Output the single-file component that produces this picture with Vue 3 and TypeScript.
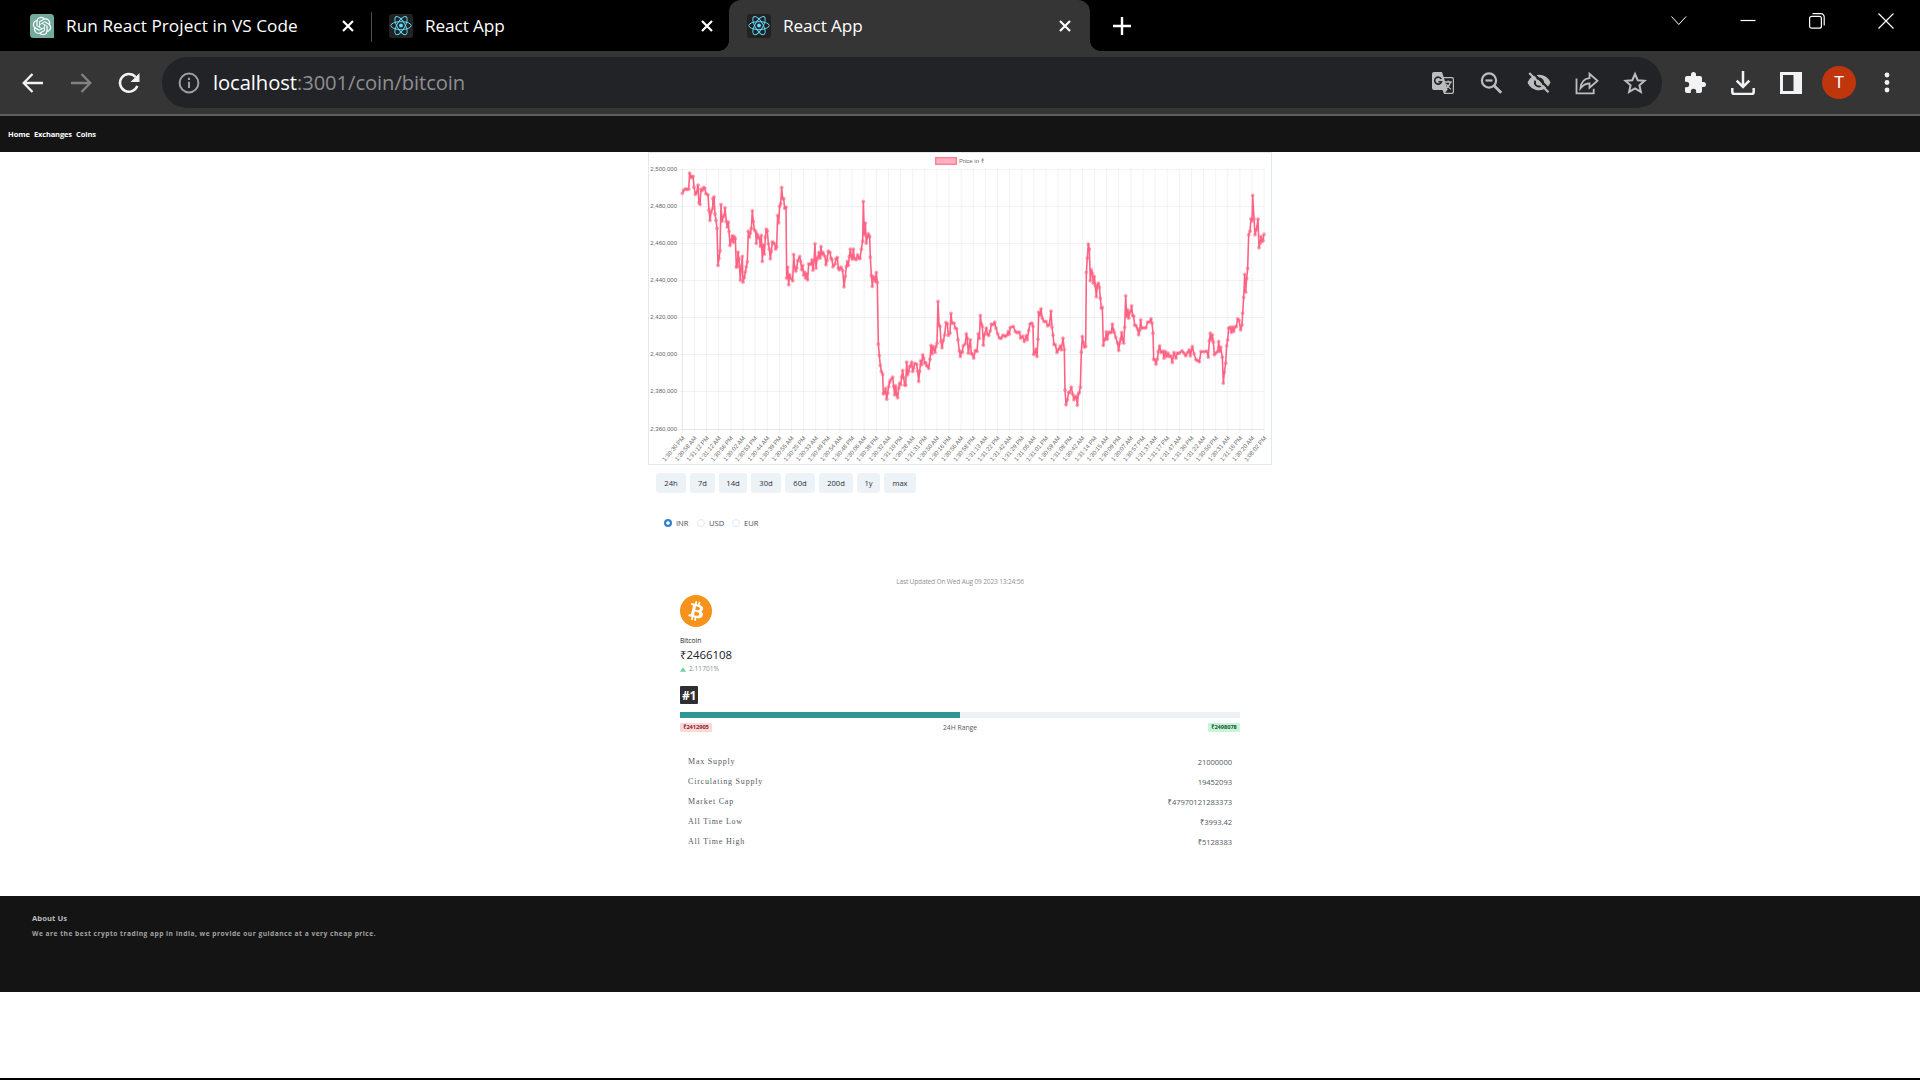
<script setup lang="ts">
interface Row { label: string; value: string }

const ranges: string[] = ['24h', '7d', '14d', '30d', '60d', '200d', '1y', 'max']
const rangeWidths: number[] = [30, 25, 28, 30, 30, 34, 23, 32]
const rows: Row[] = [
  { label: 'Max Supply', value: '21000000' },
  { label: 'Circulating Supply', value: '19452093' },
  { label: 'Market Cap', value: '₹47970121283373' },
  { label: 'All Time Low', value: '₹3993.42' },
  { label: 'All Time High', value: '₹5128383' },
]

const times: string[] = ('30:30 30:58 31:12 31:12 30:56 30:02 30:53 30:44 30:39 30:55 30:25 30:33 30:49 30:54 30:48 30:06 ' +
  '30:38 30:32 31:10 30:28 31:31 30:50 30:16 30:56 30:58 31:13 31:22 31:42 31:29 31:05 31:01 30:59 31:08 30:42 31:14 ' +
  '30:15 30:09 30:07 30:57 31:37 31:17 31:47 31:30 31:22 30:50 30:31 31:16 30:20 08:02')
  .split(' ').map((t, i) => `1:${t} ${i % 2 ? 'AM' : 'PM'}`)
const xAt = (i: number): number => 34.4 + i * 12.12
const yTicks = [2500, 2480, 2460, 2440, 2420, 2400, 2380, 2360].map((v, i) => ({
  label: `2,${String(v).slice(1)},000`, y: 17.5 + i * 37 + (i === 7 ? 1 : 0),
}))

const sections: [number, string][] = [
  [0, '127,131 131,121 137,117 141,119 146,118 149,70 153,84 156,80 159,80 162,112 166,134 170,128 174,106 177,158 180,164 183,118 187,122 191,113 194,115 198,132 204,135 207,181 210,212 213,188 218,176 219,147 222,141 225,193 228,212 231,236 234,347 237,326 240,303 243,164 246,214 249,202 253,196 255,174 259,215 262,232 265,217 267,245 270,287 274,270 277,258 280,278 282,260 286,266 289,352 292,350 294,307 297,328 301,391 304,350 307,320 309,397 313,383 316,366 319,351 322,336 325,244 328,262 331,250 334,236 337,183 340,215 343,240 347,245 349,281 352,253 355,262 358,265 361,290 364,257 367,335 370,285 373,313 376,262 379,238 382,243 385,282 388,298 391,327 394,305 397,276 400,280 404,282 407,298 410,291 413,197 416,219 419,169 422,162 425,113 428,146 431,147 434,176 438,172 440,385 443,352 446,405 449,375 452,385 458,393 461,314 464,352 467,364 470,355 473,333 479,320 482,335 485,360 488,347 491,376 494,367 497,385 500,372 503,390 506,342 512,344 516,330 519,361 522,335 525,282 528,355 531,328 534,322 537,308 540,325 543,290 546,315 549,308 555,320 558,345 561,332 565,304 570,308 573,325 576,330 579,351 585,343 588,327 592,323 595,355 598,360 603,352 608,362 612,411 616,380 619,350 622,335 625,347 628,320 631,298 634,320 637,328 640,298 643,325 648,330 653,315 657,326'],
  [630, '30,326 34,298 38,274 40,155 43,255 46,220 49,280 52,262 55,252 59,260 61,322 64,377 67,410 70,380 73,385 76,395 79,368 82,398 85,583 88,617 91,647 94,665 98,673 100,732 103,730 107,716 110,748 113,730 116,710 119,697 122,690 128,682 131,710 134,735 137,708 140,735 143,744 146,715 149,700 152,705 155,682 158,662 161,684 164,706 167,706 170,637 173,675 176,665 179,650 182,648 185,637 188,665 191,655 194,641 200,643 203,664 206,695 209,665 212,633 215,645 218,615 221,625 224,640 227,638 230,648 233,648 236,656 240,628 243,587 246,612 249,590 252,598 255,608 258,590 261,580 264,455 267,525 270,530 273,575 276,594 280,572 284,555 288,518 292,522 295,557 300,550 303,491 306,520 312,520 316,535 320,537 324,570 328,603 331,620 334,606 337,608 340,588 346,582 349,552 352,565 355,610 358,590 361,570 364,612 367,612 371,625 376,602 381,605 385,552 388,566 391,497 394,522 397,530 400,586 403,555 409,535 412,552 416,557 421,543 424,523 430,525 434,517 438,535 443,552 448,564 453,566 459,556 465,560 471,556 475,545 478,553 481,533 490,530 496,545 501,549 508,547 512,565 518,559 523,575 529,557 532,570 536,542 540,522 546,520 549,530 551,614 554,610 558,598 561,620 564,568 566,487 570,497 573,477 577,505 582,515 588,515 593,528 598,525 603,484 606,532 609,556 612,584 616,585 621,608 626,598 631,588 634,600 639,565 643,600 645,721 648,765 652,750 656,728'],
  [1260, '29,728 34,712 38,733 42,750 46,740 49,742 52,766 55,733 58,728 61,712 64,607 67,560 70,578 73,592 77,590 79,368 82,325 85,283 88,298 91,393 94,360 97,370 100,400 103,380 106,408 109,441 112,408 115,400 118,412 121,445 124,475 127,473 130,587 133,570 136,568 139,546 142,568 146,548 150,548 154,548 157,523 160,540 163,548 167,562 173,580 176,602 179,580 182,568 185,548 188,570 191,580 194,532 197,438 200,500 203,480 206,505 209,488 212,485 215,468 218,497 221,499 224,526 228,528 233,538 236,555 239,542 242,510 245,535 252,534 258,534 263,517 270,516 273,507 276,520 279,550 281,629 285,630 288,643 292,628 295,605 299,588 303,608 309,604 312,625 316,605 320,620 324,610 328,620 333,618 337,638 342,608 348,625 352,610 358,610 366,603 372,610 377,618 383,608 388,600 391,618 397,590 402,612 408,630 413,632 418,636 423,605 432,606 440,604 445,622 448,573 451,550 454,570 457,555 460,577 463,615 467,610 473,605 476,575 479,605 482,592 487,622 490,700 493,668 497,640 500,588 503,570 506,535 511,532 514,548 518,532 521,545 525,532 529,530 533,507 537,512 542,540 546,525 548,490 551,443 554,374 557,427 560,386 563,356 566,255 570,244 573,207 576,213 578,137 582,207 585,255 589,240 594,208 597,294 600,280 603,260 606,275 609,272 612,253'],
]
const points: [number, number][] = sections.flatMap(([dx, s]) =>
  s.split(' ').map((p): [number, number] => {
    const [x, y] = p.split(',').map(Number)
    return [(x + dx) / 3 - 8, y / 3 - 2.2]
  }))
const line = points.map(([x, y]) => `${x.toFixed(2)},${y.toFixed(2)}`).join(' ')
</script>

<template>
  <div class="screen">
    <header class="tabs">
      <div class="tab first">
        <svg class="fav" viewBox="0 0 24 24"><path d="M3.500 0h17A3.500 3.500 0 0 1 24 3.500V24H3.500A3.500 3.500 0 0 1 0 20.500v-17A3.500 3.500 0 0 1 3.500 0z" fill="#74aa9c" /><g transform="translate(2.800 2.800) scale(.77)" fill="#fff"><path d="M22.2819 9.8211a5.9847 5.9847 0 0 0-.5157-4.9108 6.0462 6.0462 0 0 0-6.5098-2.9A6.0651 6.0651 0 0 0 4.9807 4.1818a5.9847 5.9847 0 0 0-3.9977 2.9 6.0462 6.0462 0 0 0 .7427 7.0966 5.98 5.98 0 0 0 .511 4.9107 6.051 6.051 0 0 0 6.5146 2.9001A5.9847 5.9847 0 0 0 13.2599 24a6.0557 6.0557 0 0 0 5.7718-4.2058 5.9894 5.9894 0 0 0 3.9977-2.9001 6.0557 6.0557 0 0 0-.7475-7.0729zm-9.022 12.6081a4.4755 4.4755 0 0 1-2.8764-1.0408l.1419-.0804 4.7783-2.7582a.7948.7948 0 0 0 .3927-.6813v-6.7369l2.02 1.1686a.071.071 0 0 1 .038.052v5.5826a4.504 4.504 0 0 1-4.4945 4.4944zm-9.6607-4.1254a4.4708 4.4708 0 0 1-.5346-3.0137l.142.0852 4.783 2.7582a.7712.7712 0 0 0 .7806 0l5.8428-3.3685v2.3324a.0804.0804 0 0 1-.0332.0615L9.74 19.9502a4.4992 4.4992 0 0 1-6.1408-1.6464zM2.3408 7.8956a4.485 4.485 0 0 1 2.3655-1.9728V11.6a.7664.7664 0 0 0 .3879.6765l5.8144 3.3543-2.0201 1.1685a.0757.0757 0 0 1-.071 0l-4.8303-2.7865A4.504 4.504 0 0 1 2.3408 7.872zm16.5963 3.8558L13.1038 8.364 15.1192 7.2a.0757.0757 0 0 1 .071 0l4.8303 2.7913a4.4944 4.4944 0 0 1-.6765 8.1042v-5.6772a.79.79 0 0 0-.407-.667zm2.0107-3.0231l-.142-.0852-4.7735-2.7818a.7759.7759 0 0 0-.7854 0L9.409 9.2297V6.8974a.0662.0662 0 0 1 .0284-.0615l4.8303-2.7866a4.4992 4.4992 0 0 1 6.6802 4.66zM8.3065 12.863l-2.02-1.1638a.0804.0804 0 0 1-.038-.0567V6.0742a4.4992 4.4992 0 0 1 7.3757-3.4537l-.142.0805L8.704 5.459a.7948.7948 0 0 0-.3927.6813zm1.0976-2.3654l2.602-1.4998 2.6069 1.4998v2.9994l-2.5974 1.4997-2.6067-1.4997Z" /></g></svg>
        <span class="title long">Run React Project in VS Code</span>
        <svg class="x" viewBox="0 0 12 12"><path d="M1 1l10 10M11 1L1 11" /></svg>
      </div>
      <div v-for="n in 2" :key="n" class="tab" :class="n === 1 ? 'second' : 'active'">
        <svg class="fav" viewBox="0 0 24 24"><rect width="24" height="24" rx="3" fill="#222" /><g fill="none" stroke="#61dafb" stroke-width=".95"><ellipse cx="12" cy="11.6" rx="10.2" ry="4" /><ellipse cx="12" cy="11.6" rx="10.2" ry="4" transform="rotate(60 12 11.6)" /><ellipse cx="12" cy="11.6" rx="10.2" ry="4" transform="rotate(120 12 11.6)" /></g><circle cx="12" cy="11.6" r="2" fill="#61dafb" /></svg>
        <span class="title">React App</span>
        <svg class="x" viewBox="0 0 12 12"><path d="M1 1l10 10M11 1L1 11" /></svg>
      </div>
      <svg class="plus" viewBox="0 0 18 18"><path d="M9 0v18M0 9h18" /></svg>
      <div class="win">
        <svg viewBox="0 0 16 16"><path d="M.5 3.5l7.3 8 7.3-8" /></svg>
        <svg viewBox="0 0 16 16"><path d="M.5 7.5h15" stroke-width="1.2" /></svg>
        <svg viewBox="0 0 16 16"><rect x=".6" y="3.4" width="11.8" height="11.8" rx="2" stroke-width="1.2" /><path d="M3.5.7h8.300a3.400 3.400 0 0 1 3.400 3.400v8.300" stroke-width="1.200" /></svg>
        <svg viewBox="0 0 16 16"><path d="M.5.5l15 15M15.500.5l-15 15" stroke-width="1.2" /></svg>
      </div>
    </header>

    <div class="toolbar">
      <svg class="nav-ic" viewBox="0 0 24 24"><path d="M22 12H3M11.500 3L2.700 12l8.800 9" fill="none" stroke="#f1f3f4" stroke-width="2.3" /></svg>
      <svg class="nav-ic" viewBox="0 0 24 24"><path d="M2 12h19M12.500 3l8.800 9-8.800 9" fill="none" stroke="#808183" stroke-width="2.300" /></svg>
      <svg class="nav-ic" viewBox="0 0 24 24"><path d="M20.300 14.800A8.900 8.900 0 1 1 18.600 6" fill="none" stroke="#f1f3f4" stroke-width="2.500" /><path d="M22.500 2v9h-9z" fill="#f1f3f4" /></svg>
      <div class="omni">
        <svg class="info" viewBox="0 0 22 22"><circle cx="11" cy="11" r="9.400" fill="none" stroke="#9aa0a6" stroke-width="2" /><path d="M11 9.700V16M11 5.800v2.200" stroke="#9aa0a6" stroke-width="2" /></svg>
        <div class="url"><b>localhost</b><span>:3001/coin/bitcoin</span></div>
        <div class="acts">
          <svg viewBox="0 0 24 24"><path fill="#bdbdbd" d="M3 1h8l1.600 5H21a2 2 0 0 1 2 2v13a2 2 0 0 1-2 2h-8l-1.500-4H3a2 2 0 0 1-2-2V3a2 2 0 0 1 2-2z" /><path fill="#222327" d="M13 7.200h7.800a1 1 0 0 1 1 1v12.600a1 1 0 0 1-1 1h-6.700l2.500-3z" /><path d="M10.300 8A3.500 3.500 0 1 0 10.500 10.800H7.400" fill="none" stroke="#222327" stroke-width="1.600" /><path d="M13.800 11h7M17.200 9.500V11M19.500 11c-.7 3-2.700 5.200-4.500 6.300M15.300 13c1 2 2.800 4 4.700 5.300" fill="none" stroke="#bdbdbd" stroke-width="1.300" /></svg>
          <svg viewBox="0 0 24 24"><g fill="none" stroke="#bdbdbd" stroke-width="2.200"><circle cx="10" cy="9.500" r="7.100" /><path d="M15.200 14.800l7 7" stroke-width="2.800" /><path d="M6.500 9.500h7" /></g></svg>
          <svg viewBox="0 0 24 24"><path fill="#bdbdbd" d="M12 3.800c5 0 9.500 3 11.500 7.700A12.700 12.700 0 0 1 12 19.300C7 19.300 2.500 16.200.5 11.500A12.700 12.700 0 0 1 12 3.800z" /><circle cx="12" cy="11.500" r="4.100" fill="none" stroke="#222327" stroke-width="2" /><path d="M4.800.8L23 19" stroke="#222327" stroke-width="2.200" /><path d="M2.200 2L21.500 21.300" stroke="#bdbdbd" stroke-width="2.200" /></svg>
          <svg viewBox="0 0 24 24"><g fill="none" stroke="#bdbdbd" stroke-width="1.800"><path d="M1.500 7.500v14.800h17.200v-4.500" /><path d="M5.500 17.300c.5-6 3.500-9.700 9-10.200V2.800l8 7-8 7v-4.300c-4 0-6.500 1.500-9 4.800z" stroke-linejoin="miter" /></g></svg>
          <svg viewBox="0 0 24 24"><path d="M12 3l2.700 6.200 6.800.6-5.100 4.500 1.500 6.600-5.900-3.500-5.900 3.500 1.500-6.600-5.100-4.500 6.800-.6z" fill="none" stroke="#bdbdbd" stroke-width="2" /></svg>
        </div>
      </div>
      <div class="ext">
        <svg viewBox="0 0 24 24"><path fill="#f1f3f4" d="M20.500 11H19V7c0-1.100-.9-2-2-2h-4V3.500a2.500 2.500 0 0 0-5 0V5H4c-1.100 0-2 .9-2 2v3.800h1.500a2.700 2.700 0 0 1 0 5.400H2V20c0 1.100.9 2 2 2h3.800v-1.500a2.700 2.700 0 0 1 5.400 0V22H17c1.100 0 2-.9 2-2v-4h1.500a2.500 2.500 0 0 0 0-5z" /></svg>
        <svg viewBox="0 0 24 24"><g fill="none" stroke="#f1f3f4" stroke-width="2.500"><path d="M12 0v16M5.700 9.700L12 16l6.300-6.300" /><path d="M1.300 17v4a2 2 0 0 0 2 2h17.400a2 2 0 0 0 2-2v-4" /></g></svg>
        <svg viewBox="0 0 24 24"><path fill="#f1f3f4" fill-rule="evenodd" d="M1 1h22v22H1zM4 4v16h10.500V4z" /></svg>
        <span class="avatar">T</span>
        <svg viewBox="0 0 24 24"><g fill="#f1f3f4"><circle cx="12" cy="4" r="2.400" /><circle cx="12" cy="11.500" r="2.400" /><circle cx="12" cy="19" r="2.400" /></g></svg>
      </div>
    </div>

    <nav class="site-nav"><a class="n1">Home</a><a class="n2">Exchanges</a><a class="n3">Coins</a></nav>

    <main>
      <section class="chart">
        <svg width="622" height="311" viewBox="1 1 622 311">
          <g stroke="#000" stroke-opacity=".05">
            <line v-for="(t, i) in times" :key="'v' + i" :x1="xAt(i)" :x2="xAt(i)" y1="17" y2="281" />
            <line v-for="t in yTicks" :key="t.label" x1="30" x2="616.300" :y1="t.y" :y2="t.y" />
          </g>
          <path d="M34.500 17.500V277.500H616" fill="none" stroke="#000" stroke-opacity=".05" />
          <g class="lab">
            <text v-for="t in yTicks" :key="t.label" x="29" :y="t.y + 1.7" text-anchor="end">{{ t.label }}</text>
            <text v-for="(t, i) in times" :key="i" text-anchor="end" :transform="`translate(${xAt(i) + 1.3} 285.300) rotate(-50)`" y="1.500">{{ t }}</text>
            <text x="311" y="11" class="legend">Price in ₹</text>
          </g>
          <rect x="287.700" y="5.700" width="20.600" height="6.600" fill="#ffb1c1" stroke="#ff7e98" stroke-width="1.500" />
          <polyline :points="line" fill="none" stroke="#ff6384" stroke-width="1.600" stroke-linejoin="round" />
          <circle v-for="(p, i) in points" :key="i" :cx="p[0]" :cy="p[1]" r="1.650" fill="#ff6384" fill-opacity=".5" stroke="#ff6384" stroke-opacity=".6" stroke-width=".5" />
        </svg>
      </section>

      <div class="ranges"><button v-for="(r, i) in ranges" :key="r" :style="{ width: rangeWidths[i] + 'px' }">{{ r }}</button></div>

      <div class="radios">
        <label><i class="on"></i>INR</label><label><i></i>USD</label><label><i></i>EUR</label>
      </div>

      <section class="details">
        <p class="updated"><span>Last Updated On Wed Aug 09 2023 13:24:56</span></p>
        <svg class="coin" viewBox="0 0 32 32"><circle cx="16" cy="16" r="16" fill="#f7931a" /><path fill="#fff" fill-rule="evenodd" d="M23.189 14.020c.314-2.096-1.283-3.223-3.465-3.975l.708-2.840-1.728-.430-.690 2.765c-.454-.114-.920-.220-1.385-.326l.695-2.783L15.596 6l-.708 2.839c-.376-.086-.746-.170-1.104-.260l.002-.009-2.384-.595-.460 1.846s1.283.294 1.256.312c.700.175.826.638.805 1.006l-.806 3.235c.048.012.110.030.180.057l-.183-.045-1.130 4.532c-.086.212-.303.531-.793.410.018.025-1.256-.313-1.256-.313l-.858 1.978 2.250.561c.418.105.828.215 1.231.318l-.715 2.872 1.727.430.708-2.840c.472.127.930.245 1.378.357l-.706 2.828 1.728.430.715-2.866c2.948.558 5.164.333 6.097-2.333.752-2.146-.037-3.385-1.588-4.192 1.130-.260 1.980-1.003 2.207-2.538zm-3.950 5.538c-.533 2.147-4.148.986-5.320.695l.950-3.805c1.172.293 4.929.872 4.370 3.110zm.535-5.569c-.487 1.953-3.495.960-4.470.717l.860-3.450c.975.243 4.118.696 3.610 2.733z" /></svg>
        <p class="name">Bitcoin</p>
        <p class="price">₹2466108</p>
        <p class="change"><svg width="6" height="5" viewBox="0 0 6 5"><path d="M3 .300L6 4.800H0z" fill="#68d391" /></svg>2.11701%</p>
        <p class="rank">#1</p>
        <div class="bar"><div class="fill"></div></div>
        <div class="range-row"><span class="badge low">₹2412905</span><span class="mid">24H Range</span><span class="badge high">₹2498078</span></div>
        <dl>
          <div v-for="r in rows" :key="r.label"><dt>{{ r.label }}</dt><dd>{{ r.value }}</dd></div>
        </dl>
      </section>
    </main>

    <footer>
      <h2>About Us</h2>
      <p>We are the best crypto trading app in India, we provide our guidance at a very cheap price.</p>
    </footer>
    <div class="edge"></div>
  </div>
</template>

<style>
body { margin: 0; background: #fff; overflow: hidden; }
</style>

<style scoped>
.screen { width: 1920px; height: 1080px; display: flex; flex-direction: column; font-family: "Open Sans", "Noto Sans", sans-serif; background: #fff; overflow: hidden; }
.screen * { box-sizing: border-box; }
p, h2, dl, dd { margin: 0; }
svg { display: block; flex: none; }
.tabs { height: 51px; background: #000; display: flex; align-items: center; flex: none; }
.tab { height: 51px; display: flex; align-items: center; flex: none; position: relative; }
.first { width: 372px; padding: 0 18px 0 30px; }
.first::after { content: ""; position: absolute; right: 0; top: 12px; width: 1px; height: 30px; background: #4d4d4d; }
.second { width: 357px; padding: 0 16px 0 17px; }
.active { width: 361px; padding: 0 19px 0 18px; background: #353535; border-radius: 12px 12px 0 0; }
.active::before, .active::after { content: ""; position: absolute; bottom: 0; width: 10px; height: 10px; }
.active::before { left: -10px; background: radial-gradient(circle at 0 0, transparent 9.5px, #353535 10px); }
.active::after { right: -10px; background: radial-gradient(circle at 100% 0, transparent 9.5px, #353535 10px); }
.fav { width: 24px; height: 24px; margin-top: 1px; }
.title { color: #fff; font-size: 17.2px; line-height: 24px; margin-left: 12px; flex: 1; white-space: nowrap; letter-spacing: -.1px; }
.long { letter-spacing: .06px; }
.x { width: 12px; height: 12px; stroke: #fff; stroke-width: 2.2; fill: none; }
.plus { width: 18px; height: 18px; margin-left: 23px; stroke: #fff; stroke-width: 2.4; }
.win { margin-left: auto; display: flex; gap: 53px; padding-right: 26px; margin-top: -9px; }
.win svg { width: 16px; height: 16px; fill: none; stroke: #fff; stroke-width: 1; }
.toolbar { height: 65px; flex: none; background: #353535; border-bottom: 2px solid #606060; display: flex; align-items: center; padding-left: 21px; }
.nav-ic { width: 24px; height: 24px; margin-right: 24px; }
.omni { width: 1500px; height: 51px; margin-left: -3px; border-radius: 26px; background: #222327; display: flex; align-items: center; padding: 0 15px 0 16px; }
.info { width: 22px; height: 22px; }
.url { margin: -2px 0 0 13px; font-size: 20.2px; line-height: 28px; color: #8d8f92; flex: 1; letter-spacing: -.07px; }
.url b { font-weight: 400; color: #fff; }
.acts { display: flex; gap: 24px; }
.acts svg, .ext svg { width: 24px; height: 24px; }
.ext { display: flex; align-items: center; margin-left: 21px; gap: 24px; }
.avatar { width: 34px; height: 33px; border-radius: 50%; margin: 0 -5px; background: #c0360c; color: #fff; font: 17px/33px Roboto, sans-serif; text-align: center; }
.site-nav { height: 36px; flex: none; background: #141414; color: #fff; font-size: 7.5px; font-weight: 700; line-height: 36px; display: flex; padding-left: 8px; }
.n1 { width: 26px; letter-spacing: -.05px; } .n2 { width: 42px; letter-spacing: -.15px; } .n3 { letter-spacing: -.1px; }
main { height: 744px; flex: none; width: 624px; margin: 0 auto; }
.chart { border: 1px solid #e2e8f0; height: 313px; }
.lab { font: 6px "Liberation Sans", "Open Sans", sans-serif; fill: #666; }
.ranges { display: flex; gap: 4px; margin: 8px 0 0 8px; }
.ranges button { height: 20px; border: 0; border-radius: 3px; background: #edf2f7; color: #2b313d; font: 500 7.6px "Open Sans", sans-serif; padding: 0; letter-spacing: 0; }
.radios { display: flex; margin: 24px 0 0 16px; height: 12px; color: #4c515b; font-size: 7.6px; line-height: 12px; }
.radios label { display: flex; align-items: center; width: 33px; }
.radios label + label { width: 35px; }
.radios i { width: 8px; height: 8px; border: 1px solid #e2e8f0; border-radius: 50%; margin-right: 4px; }
.radios .on { border: 0; background: radial-gradient(circle, #fff 1.4px, #3182ce 2.1px); }
.details { padding: 0 32px; margin-top: 47px; color: #1a202c; }
.updated { height: 12px; line-height: 12px; text-align: center; font-size: 6.65px; opacity: .5; letter-spacing: -.2px; }
.coin { width: 32px; height: 32px; margin-top: 7px; }
.name { margin-top: 9px; font-size: 6.65px; line-height: 10px; font-weight: 500; }
.price { font-size: 11.4px; line-height: 18px; }
.change { display: flex; align-items: center; gap: 3px; font-size: 6.65px; line-height: 10px; color: #8c9096; }
.rank { margin-top: 12px; width: 18px; height: 18px; background: #2f2f31; border-radius: 1px; color: #fff; font-weight: 700; font-size: 12px; line-height: 19px; text-align: center; letter-spacing: -.3px; }
.bar { height: 6px; background: #edf2f7; margin-top: 8px; }
.fill { width: 50%; height: 6px; background: #319795; }
.range-row { display: flex; justify-content: space-between; margin-top: 5px; height: 12px; }
.badge { width: 32px; height: 9px; border-radius: 1px; font-size: 5.7px; line-height: 8.5px; font-weight: 700; text-align: center; letter-spacing: -.05px; }
.low { background: #fed7d7; color: #822727; }
.high { background: #c6f6d5; color: #22543d; }
.mid { font-size: 6.8px; line-height: 10px; color: #555a64; }
dl { padding: 0 8px; margin-top: 17px; }
dl div { height: 20px; display: flex; justify-content: space-between; line-height: 20px; color: #555a64; }
dt { font: 8px/20px "Liberation Serif", serif; letter-spacing: .8px; }
dd { font-size: 7.6px; letter-spacing: -.05px; }
footer { height: 96px; flex: none; background: #141414; color: #a3a3a3; padding: 16px 32px; font-weight: 700; }
footer h2 { font-size: 7.6px; line-height: 12px; color: #bdbdbd; letter-spacing: .07px; }
footer p { font-size: 6.65px; line-height: 12px; margin-top: 4px; letter-spacing: .49px; }
.edge { height: 2px; flex: none; margin-top: auto; background: #000; }
</style>
